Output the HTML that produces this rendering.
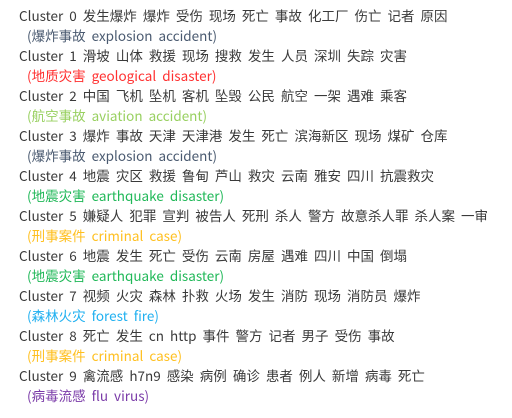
<!DOCTYPE html>
<html><head><meta charset="utf-8"><style>
body{margin:0;background:#fff;width:512px;height:418px;overflow:hidden;font-family:"Noto Sans CJK SC","Liberation Sans",sans-serif;font-size:13.5px;}
.l{position:absolute;white-space:nowrap;line-height:20px;word-spacing:3px;color:#3a3a3a;}
.c{left:19px}.p{left:27px}
</style></head><body>
<div class="l c" style="top:5px">Cluster 0 发生爆炸 爆炸 受伤 现场 死亡 事故 化工厂 伤亡 记者 原因</div>
<div class="l p" style="top:25px;color:#4a5a70">(爆炸事故 explosion accident)</div>
<div class="l c" style="top:45px">Cluster 1 滑坡 山体 救援 现场 搜救 发生 人员 深圳 失踪 灾害</div>
<div class="l p" style="top:65px;color:#ff3030">(地质灾害 geological disaster)</div>
<div class="l c" style="top:85px">Cluster 2 中国 飞机 坠机 客机 坠毁 公民 航空 一架 遇难 乘客</div>
<div class="l p" style="top:105px;color:#98d060">(航空事故 aviation accident)</div>
<div class="l c" style="top:125px">Cluster 3 爆炸 事故 天津 天津港 发生 死亡 滨海新区 现场 煤矿 仓库</div>
<div class="l p" style="top:145px;color:#4a5a70">(爆炸事故 explosion accident)</div>
<div class="l c" style="top:165px">Cluster 4 地震 灾区 救援 鲁甸 芦山 救灾 云南 雅安 四川 抗震救灾</div>
<div class="l p" style="top:185px;color:#20b858">(地震灾害 earthquake disaster)</div>
<div class="l c" style="top:205px">Cluster 5 嫌疑人 犯罪 宣判 被告人 死刑 杀人 警方 故意杀人罪 杀人案 一审</div>
<div class="l p" style="top:225px;color:#ffc020">(刑事案件 criminal case)</div>
<div class="l c" style="top:245px">Cluster 6 地震 发生 死亡 受伤 云南 房屋 遇难 四川 中国 倒塌</div>
<div class="l p" style="top:265px;color:#20b858">(地震灾害 earthquake disaster)</div>
<div class="l c" style="top:285px">Cluster 7 视频 火灾 森林 扑救 火场 发生 消防 现场 消防员 爆炸</div>
<div class="l p" style="top:305px;color:#20b0f0">(森林火灾 forest fire)</div>
<div class="l c" style="top:325px">Cluster 8 死亡 发生 cn http 事件 警方 记者 男子 受伤 事故</div>
<div class="l p" style="top:345px;color:#ffc020">(刑事案件 criminal case)</div>
<div class="l c" style="top:365px">Cluster 9 禽流感 h7n9 感染 病例 确诊 患者 例人 新增 病毒 死亡</div>
<div class="l p" style="top:385px;color:#7a3aa8">(病毒流感 flu virus)</div>
</body></html>
